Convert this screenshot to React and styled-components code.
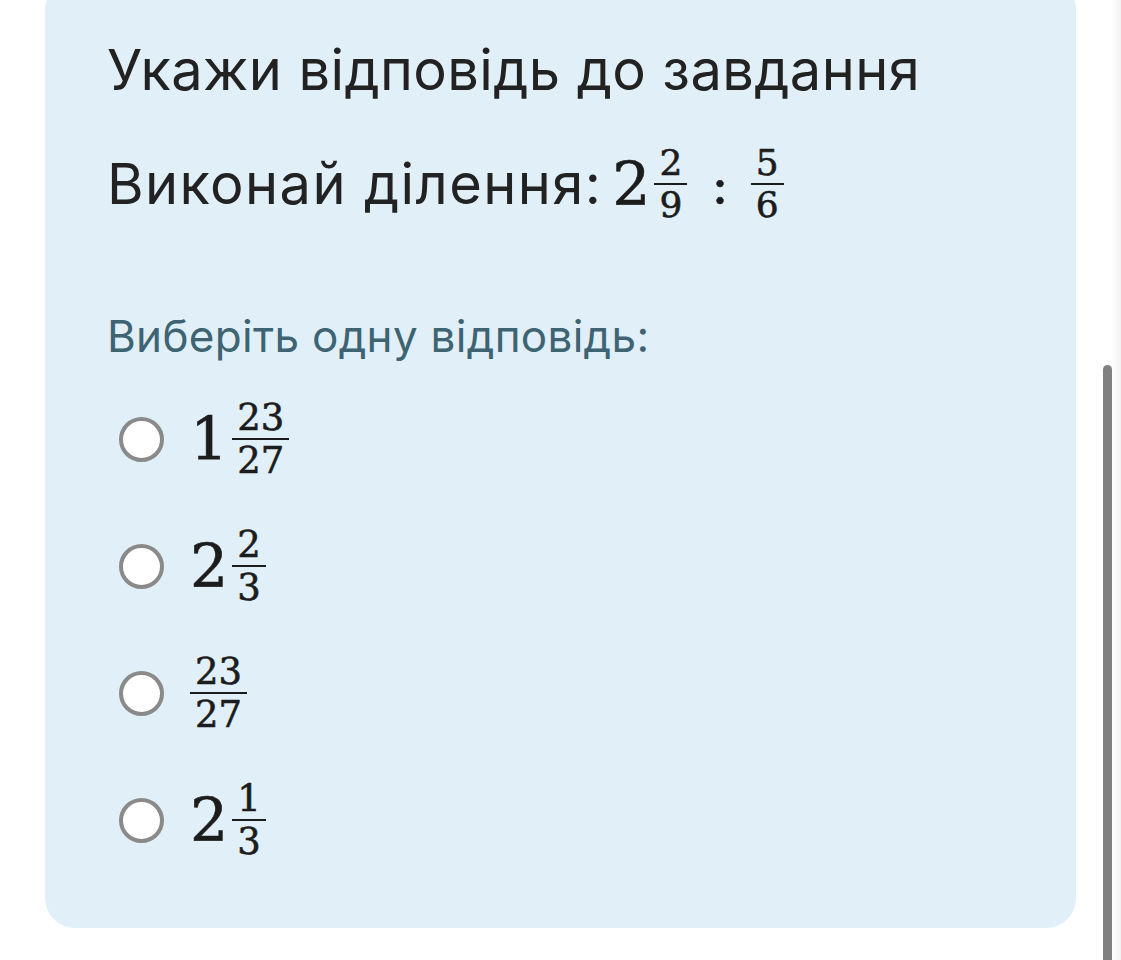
import styled, { createGlobalStyle } from "styled-components";

const GlobalStyle = createGlobalStyle`
  html, body {
    margin: 0;
    padding: 0;
    background: #ffffff;
    overflow: hidden;
  }
`;

const options = [
  { whole: "1", num: "23", den: "27" },
  { whole: "2", num: "2", den: "3" },
  { whole: null, num: "23", den: "27" },
  { whole: "2", num: "1", den: "3" },
];

function Frac({ num, den, size }) {
  return (
    <FracBox>
      <Num $size={size}>{num}</Num>
      <Den $size={size}>{den}</Den>
    </FracBox>
  );
}

export default function App() {
  return (
    <Page>
      <GlobalStyle />
      <Card>
        <Title>Укажи відповідь до завдання</Title>
        <Question>
          <QText>Виконай ділення:</QText>
          <MathGroup>
            <Whole $size={60}>2</Whole>
            <Frac num="2" den="9" size={36} />
            <Colon>:</Colon>
            <Frac num="5" den="6" size={36} />
          </MathGroup>
        </Question>
        <Hint>Виберіть одну відповідь:</Hint>
        <OptionList>
          {options.map((o, i) => (
            <Option key={i}>
              <Radio />
              <MathGroup>
                {o.whole && <Whole $size={60}>{o.whole}</Whole>}
                <Frac num={o.num} den={o.den} size={37} />
              </MathGroup>
            </Option>
          ))}
        </OptionList>
      </Card>
      <ScrollTrack>
        <ScrollThumb />
      </ScrollTrack>
    </Page>
  );
}

const Page = styled.div`
  position: relative;
  width: 1121px;
  height: 960px;
  overflow: hidden;
  background: #ffffff;
`;

const Card = styled.div`
  margin: -20px 45px 0 45px;
  height: 948px;
  box-sizing: border-box;
  background: #e1f0f8;
  border-radius: 30px;
  padding: 62px 0 0 62px;
  display: flex;
  flex-direction: column;
`;

const Title = styled.h1`
  margin: 0;
  font-family: Inter, "Noto Sans", sans-serif;
  font-weight: 400;
  font-size: 56px;
  line-height: 1;
  color: #222222;
  letter-spacing: 0.4px;
`;

const Question = styled.div`
  display: flex;
  align-items: center;
  height: 84px;
  margin-top: 44px;
`;

const QText = styled.span`
  font-family: Inter, "Noto Sans", sans-serif;
  font-size: 56px;
  line-height: 1;
  letter-spacing: 1.4px;
  color: #222222;
  margin-right: 10px;
`;

const MathGroup = styled.div`
  display: flex;
  align-items: center;
  font-family: "DejaVu Serif", "Liberation Serif", serif;
  color: #1c1c1c;
  -webkit-text-stroke: 0.6px #1c1c1c;
`;

const Whole = styled.span`
  font-size: ${(p) => p.$size}px;
  line-height: 1;
  margin-right: 4px;
`;

const FracBox = styled.span`
  display: inline-flex;
  flex-direction: column;
  align-items: center;
`;

const Num = styled.span`
  font-size: ${(p) => p.$size}px;
  line-height: 1;
  padding: 0 5px 2px;
  border-bottom: 2.5px solid #1c1c1c;
`;

const Den = styled.span`
  font-size: ${(p) => p.$size}px;
  line-height: 1;
  padding: 2px 5px 0;
`;

const Colon = styled.span`
  font-size: 52px;
  line-height: 1;
  margin: 2px 22px 0 24px;
`;

const Hint = styled.p`
  margin: 88px 0 0 0;
  font-family: Inter, "Noto Sans", sans-serif;
  font-size: 44px;
  line-height: 1;
  letter-spacing: 0.3px;
  color: #3e6373;
`;

const OptionList = styled.div`
  display: flex;
  flex-direction: column;
  gap: 43px;
  margin-top: 39px;
  padding-left: 12px;
`;

const Option = styled.label`
  display: flex;
  align-items: center;
  height: 84px;
`;

const Radio = styled.span`
  width: 45px;
  height: 45px;
  box-sizing: border-box;
  border-radius: 50%;
  border: 4px solid #8a8a8a;
  background: #ffffff;
  margin-right: 26px;
  flex-shrink: 0;
`;

const ScrollTrack = styled.div`
  position: absolute;
  top: 0;
  right: 0;
  width: 19px;
  height: 100%;
  background: linear-gradient(to right, #ffffff 0, #ffffff 50%, #f1f1f1 100%);
`;

const ScrollThumb = styled.div`
  position: absolute;
  top: 365px;
  left: 1px;
  width: 9px;
  bottom: 0;
  border-radius: 5px 5px 0 0;
  background: #808080;
`;
